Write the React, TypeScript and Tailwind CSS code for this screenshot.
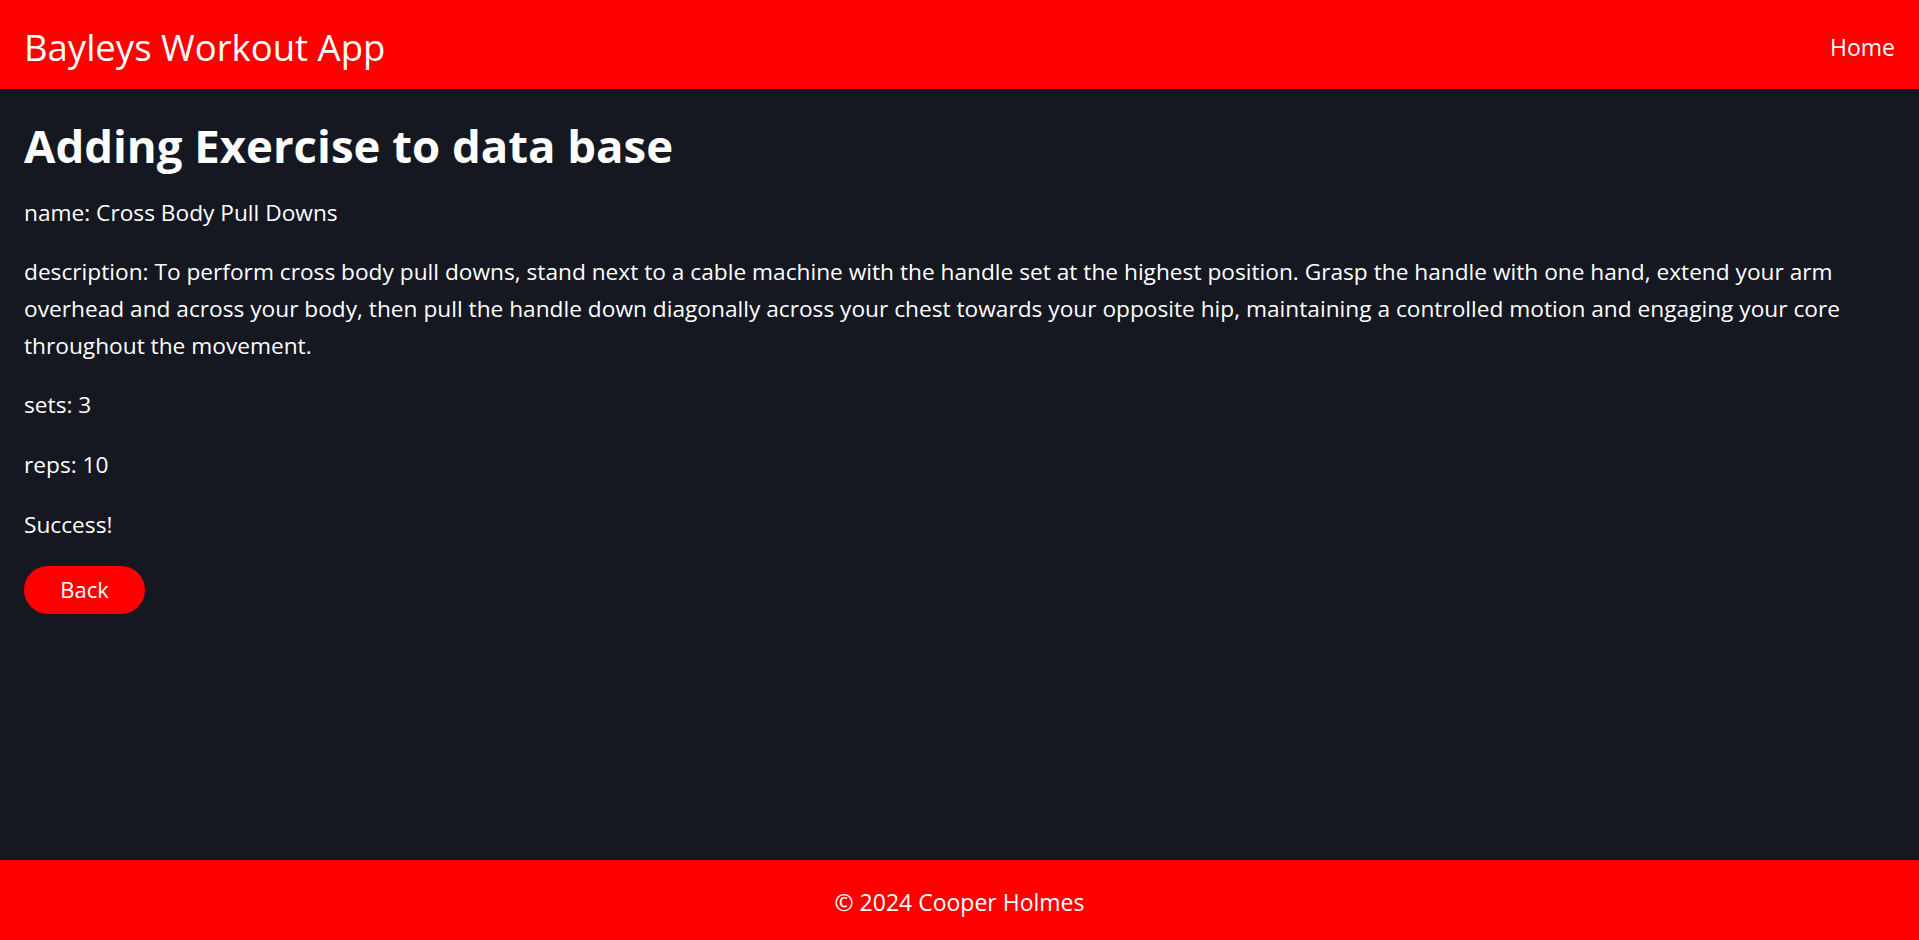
import React from 'react';

const description =
  'description: To perform cross body pull downs, stand next to a cable machine with the handle set at the highest position. Grasp the handle with one hand, extend your arm overhead and across your body, then pull the handle down diagonally across your chest towards your opposite hip, maintaining a controlled motion and engaging your core throughout the movement.';

export default function App() {
  return (
    <div className="min-h-screen flex flex-col bg-[#151821] text-white font-['Open_Sans',sans-serif]">
      <header className="h-[90px] bg-[#ff0000] border-b border-black flex items-center justify-between px-6 pt-[5px]">
        <span className="text-[36.5px] leading-none">Bayleys Workout App</span>
        <a href="#" className="text-[23px] leading-none">Home</a>
      </header>

      <main className="flex-1 px-6 pt-[28px]">
        <h1 className="text-[45.5px] font-bold leading-[1.2] mb-[22px]">Adding Exercise to data base</h1>
        <div className="text-[22.7px] leading-[36.7px] flex flex-col gap-[23px]">
          <p>name: Cross Body Pull Downs</p>
          <p>{description}</p>
          <p>sets: 3</p>
          <p>reps: 10</p>
          <p>Success!</p>
        </div>
        <button className="mt-[22px] w-[121px] h-[48px] rounded-full bg-[#ff0000] text-[22px]">Back</button>
      </main>

      <footer className="h-[80px] bg-[#ff0000] flex items-center justify-center text-[23px] pt-[4px]">
        © 2024 Cooper Holmes
      </footer>
    </div>
  );
}
